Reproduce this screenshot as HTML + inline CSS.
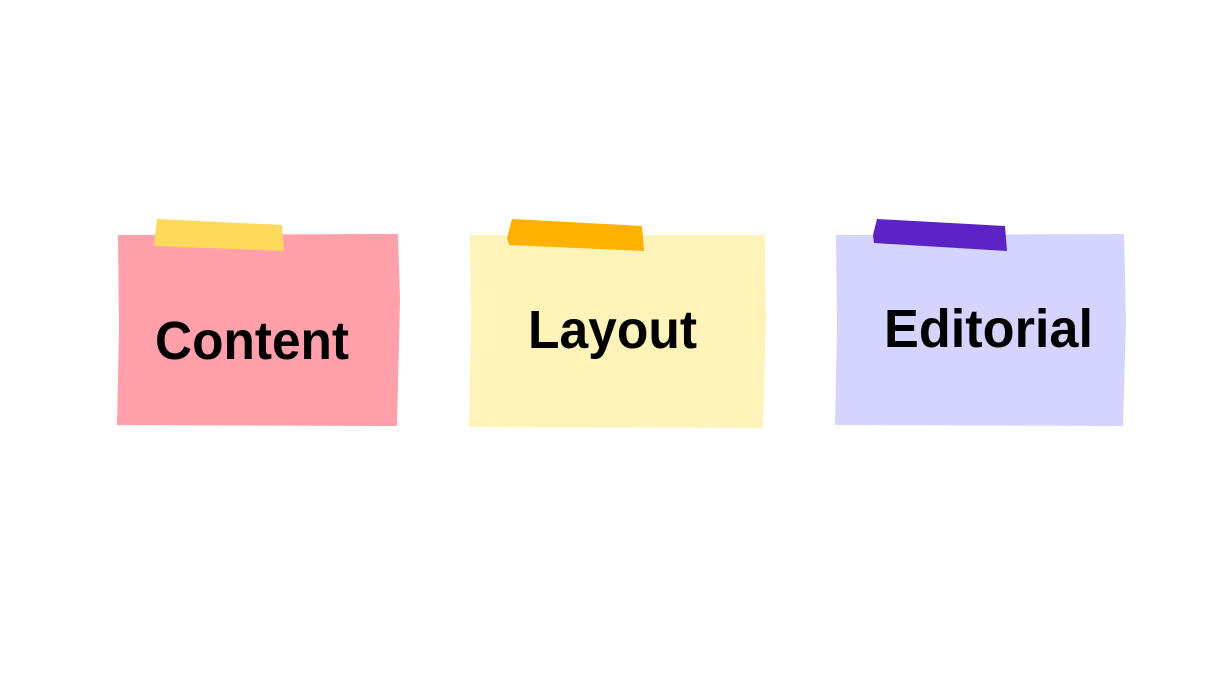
<!DOCTYPE html>
<html><head><style>html,body{margin:0;padding:0;background:#fff;width:1229px;height:690px;overflow:hidden}</style></head>
<body>
<svg width="1229" height="690" viewBox="0 0 1229 690" xmlns="http://www.w3.org/2000/svg">
<rect width="1229" height="690" fill="#fff"/>
<path d="M118,235 L398,234 L400,300 L397,426 L117,425 L119,330 Z" fill="#ffa0aa"/>
<path d="M157,219 L282,225 L284,251 L154,246 L155,236 Z" fill="#ffd95c"/>
<text x="155" y="359" font-family="Liberation Sans, sans-serif" font-weight="bold" font-size="54" textLength="194" lengthAdjust="spacingAndGlyphs">Content</text>
<path d="M470,235 L765,235 L766,320 L763,428 L469,427 L471,330 Z" fill="#fff3b9"/>
<path d="M512,219 L642,226 L644,251 L509,245 L507,238 Z" fill="#ffb100"/>
<text x="528" y="348" font-family="Liberation Sans, sans-serif" font-weight="bold" font-size="54" textLength="169" lengthAdjust="spacingAndGlyphs">Layout</text>
<path d="M836,235 L1124,234 L1126,320 L1123,426 L835,425 L837,330 Z" fill="#d4d4ff"/>
<path d="M877,219 L1005,226 L1007,251 L874,243 L873,235 Z" fill="#5b22c6"/>
<text x="884" y="347" font-family="Liberation Sans, sans-serif" font-weight="bold" font-size="54" textLength="209" lengthAdjust="spacingAndGlyphs">Editorial</text>
</svg>
</body></html>
